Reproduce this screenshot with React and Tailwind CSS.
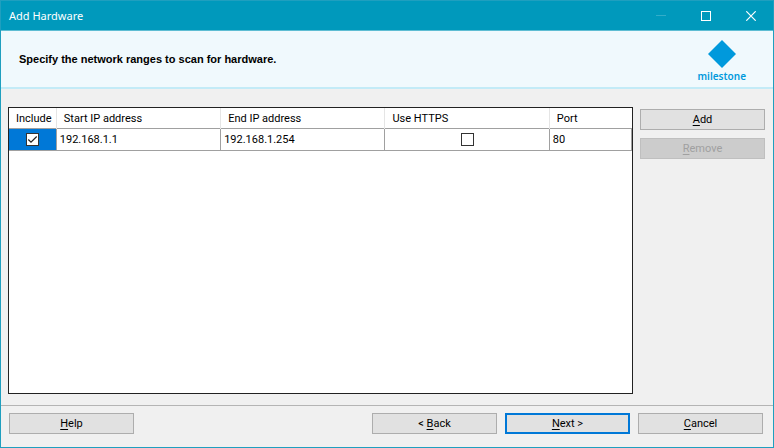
import { useState } from 'react'
import clsx from 'clsx'

const initialRanges = [
  { id: 1, include: true, start: '192.168.1.1', end: '192.168.1.254', https: false, port: '80' },
]

function DialogButton({ before, hotkey, after, primary, ...props }) {
  return (
    <button
      type="button"
      className={clsx(
        'flex h-[21px] w-[125px] items-center justify-center bg-[#e1e1e1] text-[11px] leading-4 whitespace-pre text-black disabled:border-[#bfbfbf] disabled:bg-[#cccccc] disabled:text-[#a0a0a0]',
        primary ? 'border-2 border-[#0078d7]' : 'border border-[#adadad]'
      )}
      {...props}
    >
      {before}
      <span className="underline underline-offset-2">{hotkey}</span>
      {after}
    </button>
  )
}

function CheckBox({ label, checked, onChange }) {
  return (
    <span className="relative mx-auto block h-[13px] w-[13px]">
      <input
        type="checkbox"
        aria-label={label}
        checked={checked}
        onChange={onChange}
        className="block h-[13px] w-[13px] appearance-none border border-[#333333] bg-white"
      />
      {checked && (
        <svg viewBox="0 0 13 13" className="pointer-events-none absolute inset-0 h-full w-full" fill="none" stroke="#222222" strokeWidth="1.2">
          <path d="M2.3 6.5 5 9.2 10.7 3.5" />
        </svg>
      )}
    </span>
  )
}

function TitleBar() {
  return (
    <header className="flex h-[30px] items-center justify-between border-b border-[#5ebdd3] bg-[#0099bc] pl-2 text-white">
      <span className="font-['Noto_Sans','Open_Sans',sans-serif] text-[11px] leading-4">Add Hardware</span>
      <div className="flex h-full">
        <button type="button" aria-label="Minimize" disabled className="flex w-[45px] items-center justify-center">
          <svg width="10" height="10" stroke="#33adc9" fill="none">
            <path d="M0 4.5h10" />
          </svg>
        </button>
        <button type="button" aria-label="Maximize" className="flex w-[45px] items-center justify-center">
          <svg width="10" height="10" stroke="currentColor" fill="none">
            <rect x="0.5" y="0.5" width="9" height="9" />
          </svg>
        </button>
        <button type="button" aria-label="Close" className="flex w-[45px] items-center justify-center">
          <svg width="10" height="10" stroke="currentColor" strokeWidth="1.2" fill="none">
            <path d="M0.3 0.3 9.7 9.7M9.7 0.3 0.3 9.7" />
          </svg>
        </button>
      </div>
    </header>
  )
}

function Logo() {
  return (
    <div className="flex flex-col items-center pt-1 text-[#0099dc]">
      <svg width="28" height="28" viewBox="0 0 28 28" fill="currentColor">
        <path d="M14 0 28 14 14 28 0 14z" />
      </svg>
      <span className="mt-[2px] font-['Noto_Sans','Open_Sans',sans-serif] text-[10px] leading-3 font-semibold">milestone</span>
    </div>
  )
}

export default function App() {
  const [ranges, setRanges] = useState(initialRanges)

  const toggle = (id, key) =>
    setRanges(rows => rows.map(row => (row.id === id ? { ...row, [key]: !row[key] } : row)))

  return (
    <div className="flex min-h-screen flex-col border border-[#1f9fbf] bg-[#f0f0f0] font-[Roboto,'Liberation_Sans',sans-serif] text-[11px] leading-4 text-black">
      <TitleBar />

      <section className="flex h-[58px] items-center justify-between border-b-2 border-[#c3ebf7] bg-[#f0f9fd] pr-[27px] pl-[18px]">
        <h1 className="font-['Liberation_Sans',Arial,sans-serif] text-[11px] font-bold">
          Specify the network ranges to scan for hardware.
        </h1>
        <Logo />
      </section>

      <main className="flex flex-1 gap-[7px] pt-[18px] pr-2 pb-[11px] pl-[7px]">
        <div className="flex-1 border border-[#222222] bg-white">
          <table className="w-full table-fixed border-collapse text-left">
            <colgroup>
              <col className="w-[7.6%]" />
              <col className="w-[26.4%]" />
              <col className="w-[26.4%]" />
              <col className="w-[26.4%]" />
              <col className="w-[13.2%]" />
            </colgroup>
            <thead>
              <tr className="h-5">
                {['Include', 'Start IP address', 'End IP address', 'Use HTTPS', 'Port'].map(name => (
                  <th key={name} className="border-r border-[#e5e5e5] pt-[2px] pl-[7px] font-normal whitespace-nowrap last:border-r-0">
                    {name}
                  </th>
                ))}
              </tr>
            </thead>
            <tbody>
              {ranges.map(row => (
                <tr key={row.id} className="h-[22px]">
                  <td className="border border-l-0 border-[#a0a0a0] bg-[#0078d7]">
                    <CheckBox label="Include" checked={row.include} onChange={() => toggle(row.id, 'include')} />
                  </td>
                  <td className="border border-[#a0a0a0] pt-[2px] pl-[3px]">{row.start}</td>
                  <td className="border border-[#a0a0a0] pt-[2px] pl-[3px]">{row.end}</td>
                  <td className="border border-[#a0a0a0]">
                    <CheckBox label="Use HTTPS" checked={row.https} onChange={() => toggle(row.id, 'https')} />
                  </td>
                  <td className="border border-[#a0a0a0] pt-[2px] pl-[3px]">{row.port}</td>
                </tr>
              ))}
            </tbody>
          </table>
        </div>

        <div className="flex flex-col gap-2 pt-[2px]">
          <DialogButton hotkey="A" after="dd" />
          <DialogButton hotkey="R" after="emove" disabled />
        </div>
      </main>

      <footer className="flex items-start gap-2 border-t border-[#b4b4b4] pt-[7px] pr-[10px] pb-[13px] pl-2">
        <DialogButton hotkey="H" after="elp" />
        <div className="ml-auto flex gap-2">
          <DialogButton before="< " hotkey="B" after="ack" />
          <DialogButton hotkey="N" after="ext >" primary />
          <DialogButton hotkey="C" after="ancel" />
        </div>
      </footer>
    </div>
  )
}
